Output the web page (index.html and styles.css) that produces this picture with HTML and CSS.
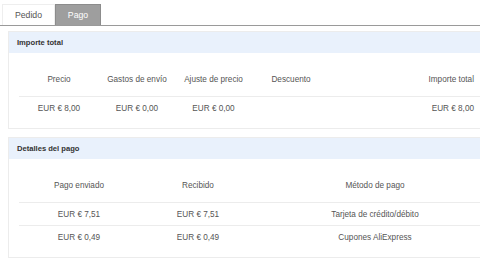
FILE: index.html
```html
<!DOCTYPE html>
<html lang="es">
<head>
<meta charset="utf-8">
<title>Pago</title>
<link rel="stylesheet" href="styles.css">
</head>
<body>
<div class="tabs">
  <div class="tab">Pedido</div>
  <div class="tab active">Pago</div>
</div>
<div class="content">
  <section class="panel">
    <div class="panel-head">Importe total</div>
    <div class="panel-body">
      <div class="grid grid-total head">
        <div>Precio</div>
        <div>Gastos de envío</div>
        <div>Ajuste de precio</div>
        <div>Descuento</div>
        <div></div>
        <div class="right">Importe total</div>
      </div>
      <div class="grid grid-total row">
        <div>EUR € 8,00</div>
        <div>EUR € 0,00</div>
        <div>EUR € 0,00</div>
        <div></div>
        <div></div>
        <div class="right">EUR € 8,00</div>
      </div>
    </div>
  </section>
  <section class="panel">
    <div class="panel-head">Detalles del pago</div>
    <div class="panel-body">
      <div class="grid grid-pay head">
        <div>Pago enviado</div>
        <div>Recibido</div>
        <div>Método de pago</div>
      </div>
      <div class="grid grid-pay row">
        <div>EUR € 7,51</div>
        <div>EUR € 7,51</div>
        <div>Tarjeta de crédito/débito</div>
      </div>
      <div class="grid grid-pay row">
        <div>EUR € 0,49</div>
        <div>EUR € 0,49</div>
        <div>Cupones AliExpress</div>
      </div>
    </div>
  </section>
</div>
</body>
</html>
```
FILE: styles.css
```css
html, body {
  margin: 0;
  padding: 0;
  background: #fff;
  overflow: hidden;
}
body {
  width: 480px;
  font-family: "Liberation Sans", Arial, sans-serif;
  color: #555;
  font-size: 8.2px;
}
.tabs {
  display: flex;
  padding: 4px 0 0 2px;
  border-bottom: 1px solid #9a9a9a;
  height: 21px;
}
.tab {
  width: 53px;
  height: 21px;
  box-sizing: border-box;
  display: flex;
  align-items: center;
  justify-content: center;
  font-size: 8.7px;
  color: #555;
  border: 1px solid #eee;
  border-bottom: none;
}
.tab.active {
  width: 46px;
  background: #9e9e9e;
  border-color: #8c8c8c;
  color: #fff;
}
.content {
  padding: 5px 0 0 8px;
  display: flex;
  flex-direction: column;
  gap: 8px;
}
.panel {
  width: 490px;
  border: 1px solid #ececec;
  border-right: none;
  box-sizing: border-box;
}
.panel-head {
  height: 21px;
  background: #e9f1fc;
  display: flex;
  align-items: center;
  padding-left: 8px;
  font-weight: bold;
  color: #333;
  font-size: 7.6px;
}
.panel-body {
  padding: 22px 0 9px 10px;
}
.grid {
  display: grid;
  align-items: center;
  text-align: center;
}
.grid-total {
  grid-template-columns: 80px 76px 77px 78px 84px 68px;
}
.grid-pay {
  grid-template-columns: 120px 118px 236px;
}
.head {
  height: 21px;
  color: #555;
  border-bottom: 1px solid #ececec;
  align-items: start;
}
.row {
  height: 22px;
}
.grid-pay.row {
  border-bottom: 1px solid #ececec;
}
.grid-pay.row:last-child {
  border-bottom: none;
}
.right {
  text-align: right;
  padding-right: 8px;
}
```
